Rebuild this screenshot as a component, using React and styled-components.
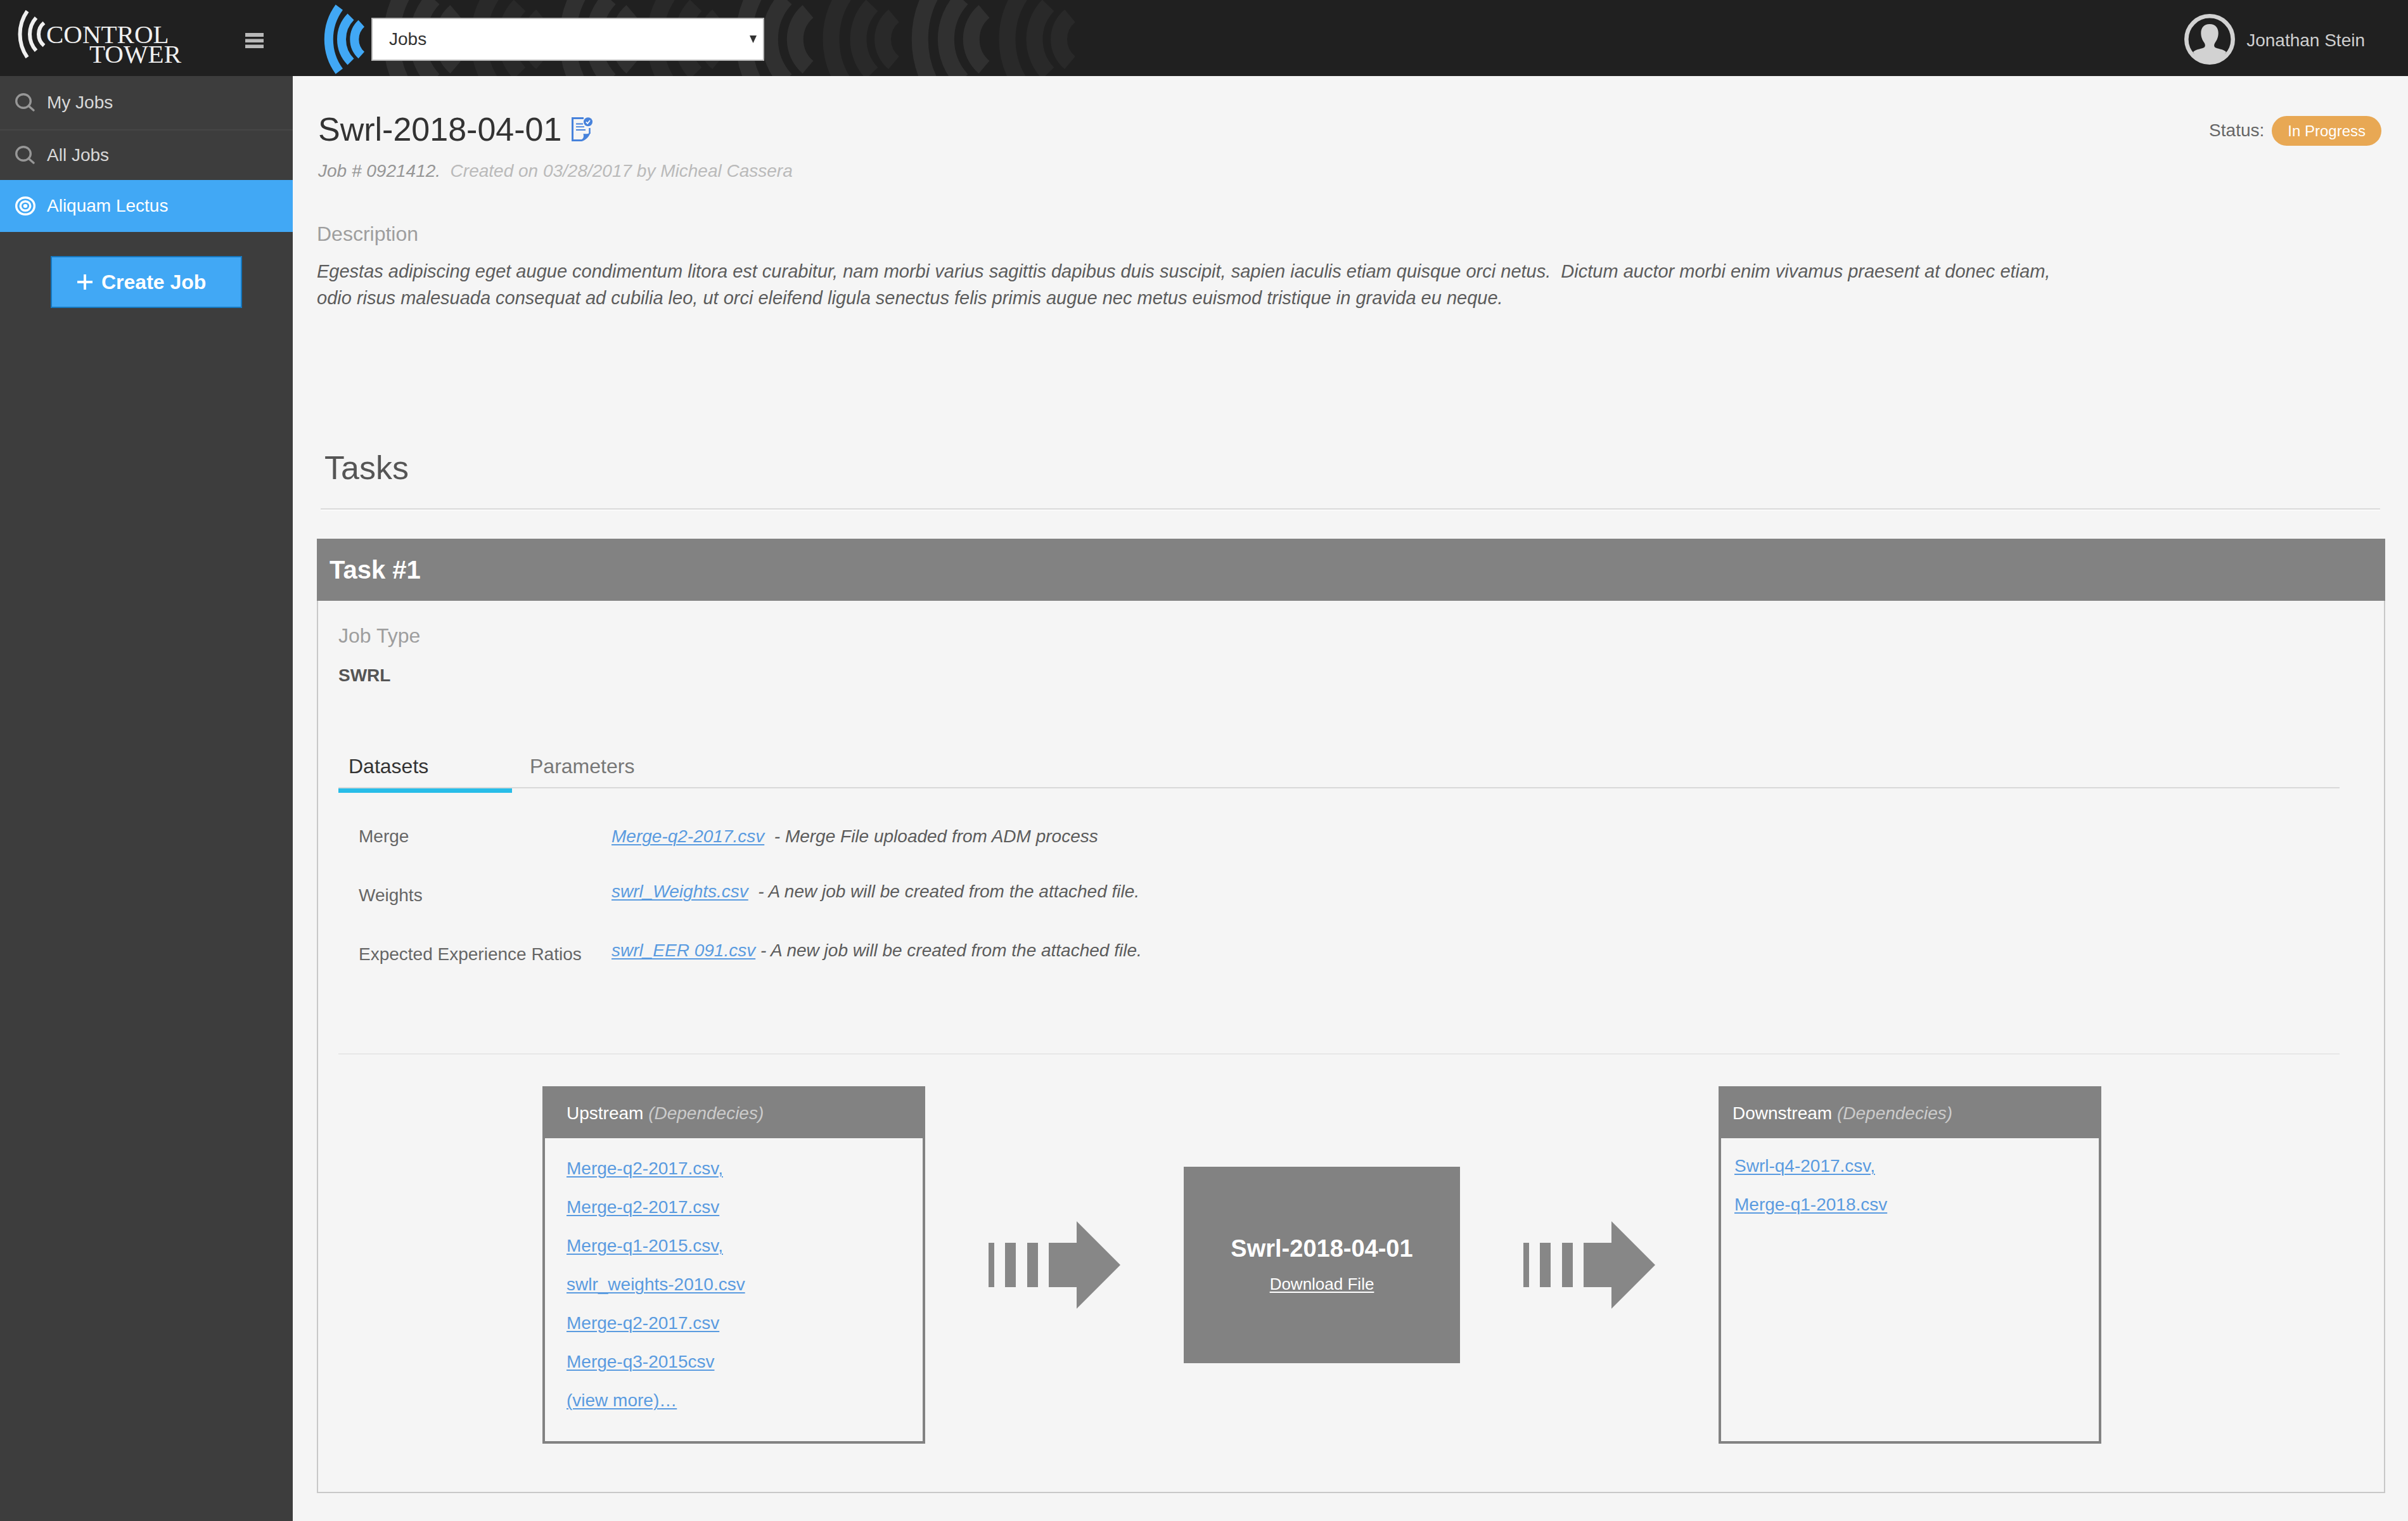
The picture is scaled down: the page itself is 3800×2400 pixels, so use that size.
import React, { useState } from "react";
import styled, { createGlobalStyle, css } from "styled-components";

const GlobalStyle = createGlobalStyle`
  *, *::before, *::after { box-sizing: border-box; }
  body {
    margin: 0;
    background: #f5f5f5;
    color: #555;
    font-family: "Liberation Sans", Arial, Helvetica, sans-serif;
    font-size: 28px;
    line-height: 42px;
  }
  h1, h2, h3, p, dl, dt, dd, ul { margin: 0; padding: 0; font-weight: 400; }
  ul { list-style: none; }
  button, select { font: inherit; color: inherit; }
  svg { display: block; flex: none; }
`;

const Page = styled.div`
  display: flex;
  flex-direction: column;
  min-height: 100vh;
`;

/* Top bar */

const TopBar = styled.header`
  display: flex;
  height: 120px;
  background: #202020;
  overflow: hidden;
`;

const Brand = styled.div`
  display: flex;
  justify-content: space-between;
  width: 462px;
  flex: none;
  padding: 8px 46px 0 28px;
`;

const LogoLink = styled.a`
  display: flex;
  padding-top: 8px;
  color: #f0f0f0;
  text-decoration: none;
`;

const Wordmark = styled.span`
  padding-top: 23px;
  font-family: "Liberation Serif", "Times New Roman", serif;
  font-size: 41px;
  line-height: 31px;
`;

const WordmarkLine = styled.span`
  display: block;
  padding-left: ${(p) => (p.$indented ? "68px" : "0")};
`;

const MenuButton = styled.button`
  align-self: center;
  padding: 0;
  border: 0;
  background: none;
  color: #b8b8b8;
`;

const TopBarMain = styled.div`
  position: relative;
  display: flex;
  flex: 1;
  align-items: center;
  padding: 4px 68px 0 49px;
`;

const Backdrop = styled.svg`
  position: absolute;
  top: 0;
  left: 140px;
`;

const SelectBox = styled.label`
  position: relative;
  width: 620px;
  margin-left: 10px;

  svg {
    position: absolute;
    top: 28px;
    right: 12px;
    pointer-events: none;
  }
`;

const AreaSelect = styled.select`
  display: block;
  width: 100%;
  height: 68px;
  padding: 0 26px;
  appearance: none;
  border: 2px solid #b8b8b8;
  border-radius: 0;
  background: #fff;
  color: #333;
`;

const Account = styled.div`
  display: flex;
  align-items: center;
  gap: 18px;
  margin-left: auto;
  color: #cfcfcf;
`;

const AccountName = styled.span`
  padding-top: 4px;
`;

/* Side bar */

const Body = styled.div`
  display: flex;
  flex: 1;
`;

const SideBar = styled.nav`
  width: 462px;
  flex: none;
  background: #3d3d3d;
`;

const NavItem = styled.a`
  display: flex;
  align-items: center;
  gap: 18px;
  height: ${(p) => p.$height}px;
  padding-left: 24px;
  color: #d8d8d8;
  text-decoration: none;

  svg { color: #979797; }

  ${(p) => p.$divided && css`border-bottom: 2px solid #464646;`}
  ${(p) => p.$active && css`
    background: #41a8f5;
    color: #fff;
    svg { color: #fff; }
  `}
`;

const CreateButton = styled.button`
  display: flex;
  align-items: center;
  gap: 14px;
  width: 302px;
  height: 82px;
  margin: 38px 80px;
  padding: 0 0 0 40px;
  border: 2px solid #1678bf;
  background: #41a8f5;
  color: #fff;
  font-size: 32px;
  font-weight: 700;
`;

/* Job */

const Main = styled.main`
  flex: 1;
  min-width: 0;
  padding: 54px 36px 44px 38px;
`;

const JobHeader = styled.div`
  display: flex;
  align-items: center;
  justify-content: space-between;
  padding-right: 6px;
`;

const JobTitle = styled.h1`
  display: flex;
  align-items: center;
  gap: 16px;
  padding-left: 2px;
  color: #333;
  font-size: 52px;
  line-height: 60px;
`;

const Status = styled.div`
  display: flex;
  align-items: center;
  gap: 12px;
  padding-top: 4px;
  color: #666;
`;

const Pill = styled.span`
  padding: 0 25px;
  border-radius: 24px;
  background: #e8a854;
  color: #fff;
  font-size: 24px;
  line-height: 47px;
`;

const Meta = styled.p`
  margin-top: 15px;
  padding-left: 2px;
  color: #bababa;
  font-style: italic;
`;

const JobNumber = styled.span`
  color: #969696;
`;

const FieldLabel = styled.h2`
  color: #9e9e9e;
  font-size: 32px;
`;

const Description = styled.section`
  margin-top: 57px;

  p {
    max-width: 2740px;
    margin-top: 17px;
    color: #5c5c5c;
    font-size: 29px;
    font-style: italic;
    white-space: pre-wrap;
  }
`;

const TasksHeading = styled.h2`
  margin: 217px 8px 46px 6px;
  padding: 0 6px 34px;
  border-bottom: 2px solid #dadada;
  box-shadow: 0 2px 0 #fafafa;
  font-size: 52px;
  line-height: 60px;
`;

const Card = styled.article`
  border: 2px solid #c8c8c8;
  border-top: 0;
`;

const CardTitle = styled.h3`
  margin: 0 -2px;
  padding-left: 20px;
  background: #828282;
  color: #fff;
  font-size: 40px;
  font-weight: 700;
  line-height: 98px;
`;

const CardBody = styled.div`
  padding: 34px 70px 76px 32px;
`;

const JobType = styled.p`
  margin-top: 21px;
  font-weight: 700;
`;

const Tabs = styled.div`
  display: flex;
  gap: 12px;
  margin-top: 101px;
  border-bottom: 2px solid #d9d9d9;
`;

const Tab = styled.button`
  position: relative;
  min-width: 274px;
  padding: 0 16px 12px;
  border: 0;
  background: none;
  color: ${(p) => (p.$active ? "#333" : "#777")};
  font-size: 32px;
  text-align: left;

  ${(p) => p.$active && css`
    &::after {
      content: "";
      position: absolute;
      top: calc(100% + 2px);
      left: 0;
      right: 0;
      height: 7px;
      background: #28bde8;
    }
  `}
`;

const Datasets = styled.dl`
  display: flex;
  flex-direction: column;
  gap: 51px;
  padding: 55px 0 135px 32px;
  border-bottom: 2px solid #e7e7e7;
`;

const DatasetRow = styled.div`
  display: grid;
  grid-template-columns: 399px 1fr;
  height: 42px;

  dt { color: #666; }
  dd { color: #5c5c5c; font-style: italic; white-space: pre-wrap; }
  & + & dd { margin-top: -6px; }
`;

const FileLink = styled.a`
  color: #5a9be0;
  text-decoration: underline;
  text-decoration-thickness: 2px;
  text-underline-offset: 3px;
`;

const Flow = styled.div`
  display: flex;
  align-items: center;
  justify-content: center;
  gap: 100px;
  padding: 50px 54px 0 0;
`;

const Box = styled.section`
  width: 604px;
  min-height: 564px;
  border: 4px solid #828282;
`;

const BoxTitle = styled.h4`
  margin: 0;
  padding-left: ${(p) => p.$inset}px;
  background: #828282;
  color: #fff;
  font-size: 28px;
  font-weight: 400;
  line-height: 78px;

  em { color: #cbcbcb; }
`;

const FileList = styled.ul`
  padding: ${(p) => (p.$compact ? "13px 21px" : "17px 34px")};
  line-height: 61px;
`;

const Output = styled.div`
  display: flex;
  flex-direction: column;
  align-items: center;
  justify-content: center;
  width: 436px;
  height: 310px;
  padding-top: 8px;
  background: #828282;
  color: #fff;

  strong { font-size: 38px; line-height: 52px; }
`;

const DownloadLink = styled.a`
  color: #fff;
  font-size: 26px;
  line-height: 60px;
  text-decoration-thickness: 2px;
  text-underline-offset: 3px;
`;

/* Drawings */

const LogoWaves = () => (
  <svg width="45" height="76" viewBox="28 16 45 76" fill="none" stroke="#f0f0f0" strokeWidth="6" aria-hidden="true">
    <path d="M43 17.5A63.7 63.7 0 0 0 43 90.5" />
    <path d="M57 28A38.8 38.8 0 0 0 57 80" />
    <path d="M69.5 36A23.3 23.3 0 0 0 69.5 72" />
  </svg>
);

const BlueWaves = () => (
  <svg width="65" height="110" viewBox="511 7 65 110" fill="none" stroke="#41a8f5" strokeWidth="14" aria-hidden="true">
    <path d="M535.3 11.5A85.5 85.5 0 0 0 535.3 112.5" />
    <path d="M553.5 26.5A50.7 50.7 0 0 0 553.5 97.5" />
    <path d="M570.3 37A33.9 33.9 0 0 0 570.3 87" />
  </svg>
);

const WavePattern = () => (
  <Backdrop width="1120" height="120" viewBox="602 0 1120 120" fill="none" strokeWidth="26" aria-hidden="true">
    {[0, 278, 556, 834].map((x) => (
      <g key={x} transform={`translate(${x} 0)`}>
        <g stroke="#303030">
          <path d="M647 -27A150 150 0 0 0 647 151" />
          <path d="M684 -2A94 94 0 0 0 684 126" />
          <path d="M719 18A57.9 57.9 0 0 0 719 106" />
        </g>
        <g stroke="#292929">
          <path d="M780 -13A127 127 0 0 0 780 137" />
          <path d="M820 8.5A77.3 77.3 0 0 0 820 115.5" />
          <path d="M854.5 25A47.9 47.9 0 0 0 854.5 99" />
        </g>
      </g>
    ))}
  </Backdrop>
);

const MenuIcon = () => (
  <svg width="29" height="24" viewBox="0 0 29 24" fill="currentColor" aria-hidden="true">
    <path d="M0 0h29v6H0zM0 9.5h29v5.5H0zM0 18.5h29V24H0z" />
  </svg>
);

const CaretIcon = () => (
  <svg width="11" height="12" viewBox="0 0 11 12" fill="#333" aria-hidden="true">
    <path d="M0 0h11L5.5 12z" />
  </svg>
);

const AvatarIcon = () => (
  <svg width="80" height="80" viewBox="0 0 80 80" aria-hidden="true">
    <circle cx="40" cy="40" r="36.7" fill="none" stroke="#d2d2d2" strokeWidth="6.6" />
    <path
      fill="#d2d2d2"
      d="M40 16C31 16 26.3 22 26.3 30C26.3 37 29 42 31.5 45.5C33.5 49 33.5 52 30 53.6C25 55.4 17 56.6 14 60C18 69 28 76.5 40 76.5S62 69 66 60C63 56.6 55 55.4 50 53.6C46.5 52 46.5 49 48.5 45.5C51 42 53.7 37 53.7 30C53.7 22 49 16 40 16Z"
    />
  </svg>
);

const SearchIcon = () => (
  <svg width="32" height="30" viewBox="0 0 32 30" fill="none" stroke="currentColor" strokeWidth="3.4" aria-hidden="true">
    <ellipse cx="13" cy="12.5" rx="11.3" ry="10.8" />
    <path d="M21 20L29 27" strokeLinecap="round" />
  </svg>
);

const TargetIcon = () => (
  <svg width="32" height="30" viewBox="0 0 32 30" fill="none" stroke="currentColor" strokeWidth="3.4" aria-hidden="true">
    <ellipse cx="16" cy="15" rx="14.3" ry="13.3" />
    <ellipse cx="16" cy="15" rx="7.8" ry="7.3" />
    <ellipse cx="16" cy="15" rx="3.3" ry="3" fill="currentColor" stroke="none" />
  </svg>
);

const PlusIcon = () => (
  <svg width="24" height="24" viewBox="0 0 24 24" fill="#fff" aria-hidden="true">
    <path d="M10 0h4v10h10v4H14v10h-4V14H0v-4h10z" />
  </svg>
);

const DocumentIcon = () => (
  <svg width="33" height="38" viewBox="0 0 33 38" fill="none" stroke="#4782db" aria-hidden="true">
    <path d="M19 1.5H1.5V36.5H16" strokeWidth="3" />
    <path d="M28.5 17V26" strokeWidth="2.5" />
    <path d="M16 38C22 36.5 28.5 30 29.7 24C27 26.5 23 26.5 18.5 26C19.5 30 19 33.5 16 35Z" fill="#4782db" stroke="none" />
    <path d="M7 10.5H18M7 15.2H20M7 20H22" strokeWidth="1.8" />
    <circle cx="26" cy="7.2" r="7" fill="#4782db" stroke="none" />
    <path d="M22.8 7.4L25.2 9.8L29 5" stroke="#fff" strokeWidth="1.8" />
  </svg>
);

const ArrowDrawing = () => (
  <svg width="208" height="138" viewBox="0 0 208 138" fill="#878787" aria-hidden="true">
    <path d="M0 34h9v70H0zM26 34h17v70H26zM61 34h17v70H61zM95 34h44V0l69 69-69 69v-34H95z" />
  </svg>
);

/* Content */

const NAV = [
  { label: "My Jobs", Icon: SearchIcon, height: 86, divided: true },
  { label: "All Jobs", Icon: SearchIcon, height: 78 },
  { label: "Aliquam Lectus", Icon: TargetIcon, height: 82, active: true },
];

const DATASETS = [
  { name: "Merge", file: "Merge-q2-2017.csv", note: "\u00a0 - Merge File uploaded from ADM process" },
  { name: "Weights", file: "swrl_Weights.csv", note: "\u00a0 - A new job will be created from the attached file." },
  { name: "Expected Experience Ratios", file: "swrl_EER 091.csv", note: " - A new job will be created from the attached file." },
];

const UPSTREAM = [
  "Merge-q2-2017.csv,",
  "Merge-q2-2017.csv",
  "Merge-q1-2015.csv,",
  "swlr_weights-2010.csv",
  "Merge-q2-2017.csv",
  "Merge-q3-2015csv",
  "(view more)…",
];

const DOWNSTREAM = ["Swrl-q4-2017.csv,", "Merge-q1-2018.csv"];

function Dependencies({ title, files, inset, compact }) {
  return (
    <Box>
      <BoxTitle $inset={inset}>
        {title} <em>(Dependecies)</em>
      </BoxTitle>
      <FileList $compact={compact}>
        {files.map((file, i) => (
          <li key={i}><FileLink href="#file">{file}</FileLink></li>
        ))}
      </FileList>
    </Box>
  );
}

export default function App() {
  const [tab, setTab] = useState("Datasets");

  return (
    <Page>
      <GlobalStyle />
      <TopBar>
        <Brand>
          <LogoLink href="#home">
            <LogoWaves />
            <Wordmark>
              <WordmarkLine>CONTROL</WordmarkLine>
              <WordmarkLine $indented>TOWER</WordmarkLine>
            </Wordmark>
          </LogoLink>
          <MenuButton type="button" aria-label="Menu"><MenuIcon /></MenuButton>
        </Brand>
        <TopBarMain>
          <WavePattern />
          <BlueWaves />
          <SelectBox>
            <AreaSelect aria-label="Area" defaultValue="Jobs">
              <option>Jobs</option>
            </AreaSelect>
            <CaretIcon />
          </SelectBox>
          <Account>
            <AvatarIcon />
            <AccountName>Jonathan Stein</AccountName>
          </Account>
        </TopBarMain>
      </TopBar>

      <Body>
        <SideBar>
          {NAV.map(({ label, Icon, height, divided, active }) => (
            <NavItem key={label} href="#jobs" $height={height} $divided={divided} $active={active}>
              <Icon />
              {label}
            </NavItem>
          ))}
          <CreateButton type="button"><PlusIcon />Create Job</CreateButton>
        </SideBar>

        <Main>
          <JobHeader>
            <JobTitle>Swrl-2018-04-01 <DocumentIcon /></JobTitle>
            <Status>Status: <Pill>In Progress</Pill></Status>
          </JobHeader>
          <Meta>
            <JobNumber>Job # 0921412.</JobNumber>
            {"\u00a0 Created on 03/28/2017 by Micheal Cassera"}
          </Meta>

          <Description>
            <FieldLabel>Description</FieldLabel>
            <p>
              {"Egestas adipiscing eget augue condimentum litora est curabitur, nam morbi varius sagittis dapibus duis suscipit, sapien iaculis etiam quisque orci netus.  Dictum auctor morbi enim vivamus praesent at donec etiam, odio risus malesuada consequat ad cubilia leo, ut orci eleifend ligula senectus felis primis augue nec metus euismod tristique in gravida eu neque."}
            </p>
          </Description>

          <TasksHeading>Tasks</TasksHeading>

          <Card>
            <CardTitle>Task #1</CardTitle>
            <CardBody>
              <FieldLabel>Job Type</FieldLabel>
              <JobType>SWRL</JobType>

              <Tabs role="tablist">
                {["Datasets", "Parameters"].map((name) => (
                  <Tab
                    key={name}
                    type="button"
                    role="tab"
                    aria-selected={tab === name}
                    $active={tab === name}
                    onClick={() => setTab(name)}
                  >
                    {name}
                  </Tab>
                ))}
              </Tabs>

              <Datasets>
                {DATASETS.map(({ name, file, note }) => (
                  <DatasetRow key={name}>
                    <dt>{name}</dt>
                    <dd><FileLink href="#file">{file}</FileLink>{note}</dd>
                  </DatasetRow>
                ))}
              </Datasets>

              <Flow>
                <Dependencies title="Upstream" files={UPSTREAM} inset={34} />
                <ArrowDrawing />
                <Output>
                  <strong>Swrl-2018-04-01</strong>
                  <DownloadLink href="#download">Download File</DownloadLink>
                </Output>
                <ArrowDrawing />
                <Dependencies title="Downstream" files={DOWNSTREAM} inset={18} compact />
              </Flow>
            </CardBody>
          </Card>
        </Main>
      </Body>
    </Page>
  );
}
